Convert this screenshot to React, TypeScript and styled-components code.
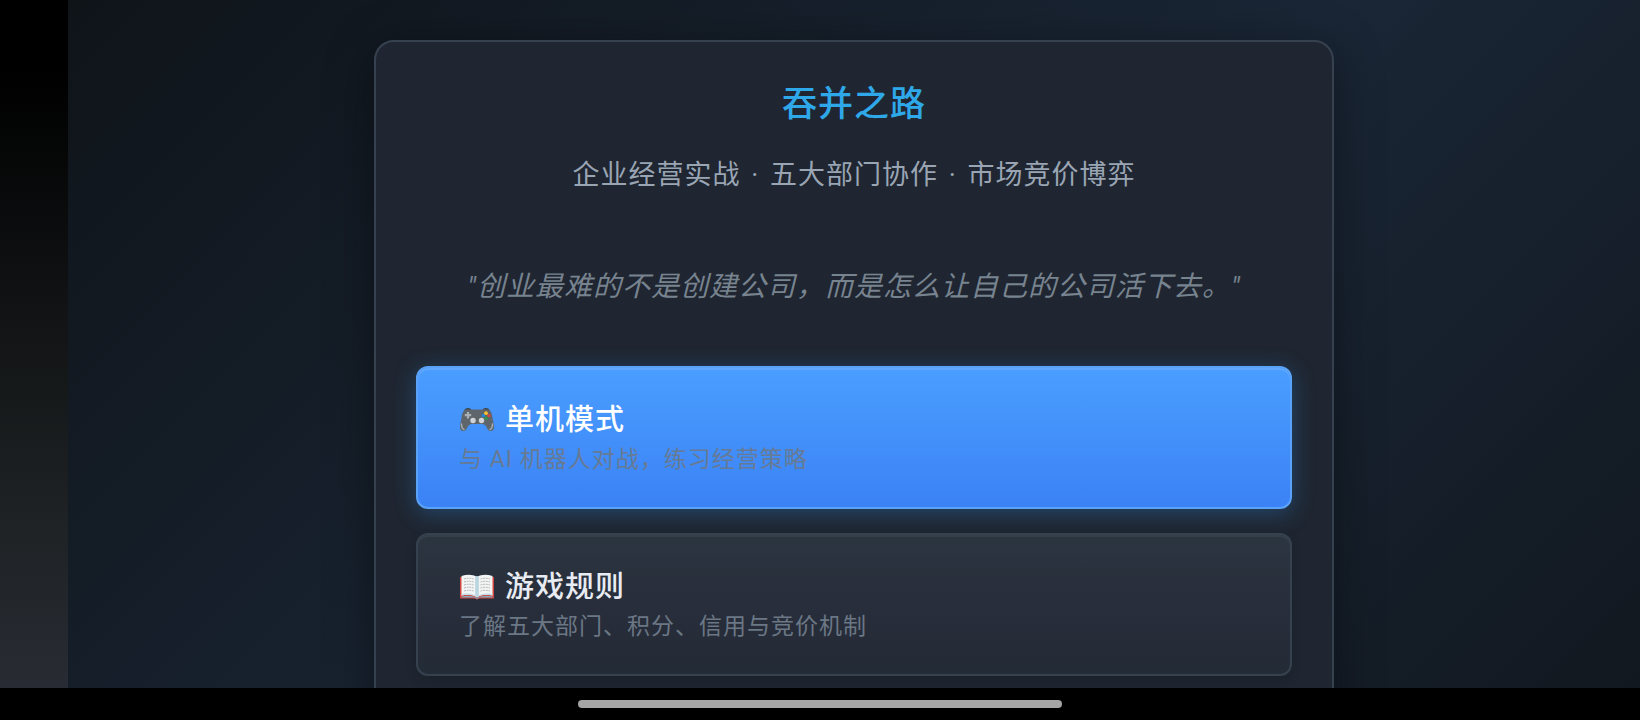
import React from "react";
import styled, { createGlobalStyle, css } from "styled-components";

const GlobalStyle = createGlobalStyle`
  *, *::before, *::after { box-sizing: border-box; }
  html, body, #root { height: 100%; margin: 0; }
  body {
    background: #000;
    color: #e8eaed;
    font-family: Roboto, "Noto Sans CJK SC", sans-serif;
    letter-spacing: 1px;
    overflow: hidden;
  }
`;

const Screen = styled.div`
  display: flex;
  flex-direction: column;
  height: 100vh;
`;

const Viewport = styled.div`
  display: flex;
  flex: 1;
  min-height: 0;
`;

const SafeArea = styled.div`
  flex: 0 0 68px;
  background: linear-gradient(180deg, #000 0%, #000 10%, #111314 45%, #1e2224 75%, #282b33 100%);
`;

const Scroller = styled.div`
  flex: 1;
  overflow-y: auto;
  scrollbar-width: none;
`;

const Page = styled.main`
  display: flex;
  justify-content: center;
  min-height: 970px;
  padding: 40px;
  background: linear-gradient(135deg, #0f1419 0%, #1a2636 50%, #0f1419 100%);
`;

const Card = styled.section`
  width: 100%;
  max-width: 960px;
  padding: 40px;
  border: 2px solid #36414f;
  border-radius: 20px;
  background: #1f2631;
  box-shadow: 0 8px 48px rgba(0, 0, 0, 0.4);
`;

const Title = styled.h1`
  margin: 0;
  font-size: 35px;
  font-weight: 500;
  line-height: 46px;
  text-align: center;
  color: #2fa8ea;
`;

const Subtitle = styled.p`
  margin: 25px 0 0;
  font-size: 27px;
  line-height: 44px;
  text-align: center;
  color: #9aa5b4;
`;

const Separator = styled.span`
  margin: 0 3px;
`;

const Quote = styled.p`
  margin: 48px 0 0;
  padding: 20px 0;
  font-size: 28px;
  font-style: italic;
  line-height: 44px;
  text-align: center;
  color: #77838f;
`;

const Menu = styled.nav`
  display: flex;
  flex-direction: column;
  gap: 24px;
  margin-top: 37px;
`;

const primaryLook = css`
  border-color: #5aa2f8;
  background: linear-gradient(180deg, #4a9eff 0%, #3b82f6 100%);
  box-shadow: 0 4px 22px rgba(46, 134, 222, 0.35), inset 0 2px 0 rgba(255, 255, 255, 0.12);
  color: #fff;
`;

const secondaryLook = css`
  border-color: #36414f;
  background: linear-gradient(180deg, #2b3540 0%, #282e3b 50%, #232b36 100%);
  box-shadow: 0 4px 12px rgba(0, 0, 0, 0.15), inset 0 2px 0 rgba(255, 255, 255, 0.05);
  color: #e8ecf2;
`;

const MenuButton = styled.button<{ $primary?: boolean }>`
  display: flex;
  flex-direction: column;
  width: 100%;
  padding: 30px 41px 29px;
  border: 2px solid;
  border-radius: 12px;
  font: inherit;
  letter-spacing: inherit;
  text-align: left;
  cursor: pointer;
  ${({ $primary }) => ($primary ? primaryLook : secondaryLook)}
`;

const ButtonTitle = styled.span`
  display: flex;
  align-items: center;
  gap: 10px;
  font-size: 29px;
  font-weight: 500;
  line-height: 44px;
`;

const ButtonNote = styled.span<{ $primary?: boolean }>`
  font-size: 23px;
  line-height: 36px;
  color: ${({ $primary }) => ($primary ? "#677a94" : "#6b7785")};
`;

const Icon = styled.svg`
  flex: none;
  width: 36px;
  height: 28px;
`;

const SystemBar = styled.footer`
  display: flex;
  justify-content: center;
  align-items: center;
  flex: 0 0 32px;
  background: #000;
`;

const HomeIndicator = styled.div`
  width: 484px;
  max-width: 60%;
  height: 8px;
  border-radius: 4px;
  background: #a6a6a6;
`;

const GamepadIcon = () => (
  <Icon viewBox="0 0 36 28" aria-hidden="true">
    <path d="M5 5 Q6 2 9 2 Q12 2 12.500 4 H23.500 Q24 2 27 2 Q30 2 31 5Z" fill="#3c4449" />
    <path d="M7 3.500 H29 Q32 4 33 9 L35 20 Q35.500 25 31.500 25 Q29 25 27.500 21 Q26 18 23 18 H13 Q10 18 8.500 21 Q7 25 4.500 25 Q.5 25 1 20 L3 9 Q4 4 7 3.500Z" fill="#5f666b" />
    <path d="M2.500 18 Q2.500 22.500 5 23.500 M33.500 18 Q33.500 22.500 31 23.500" fill="none" stroke="#a4acb0" strokeWidth="1.500" strokeLinecap="round" />
    <path d="M9 6 V12.500 M5.800 9.200 H12.200" stroke="#a9b0b5" strokeWidth="2.200" />
    <circle cx="14" cy="14.500" r="2.700" fill="#d0d4d6" />
    <circle cx="22.500" cy="14.500" r="2.700" fill="#d0d4d6" />
    <circle cx="27" cy="7.200" r="1.900" fill="#fbc02d" />
    <circle cx="24.300" cy="9.600" r="1.700" fill="#1e88e5" />
    <circle cx="30" cy="9.600" r="1.700" fill="#d9443c" />
    <circle cx="27.200" cy="12.200" r="1.700" fill="#2e9650" />
  </Icon>
);

const BookIcon = () => (
  <Icon viewBox="0 0 36 28" aria-hidden="true">
    <path d="M1 4 H35 V25.500 H20.500 L18 26.500 L15.500 25.500 H1Z" fill="#d2453f" />
    <path d="M2.500 23.500 Q10 21.500 18 24.500 Q26 21.500 33.500 23.500 V24.500 H20.500 L18 26 L15.500 24.500 H2.500Z" fill="#82a9b9" />
    <path d="M2.500 3 Q11 .5 18 3.500 Q25 .5 33.500 3 V22.500 Q25 20.500 18 24 Q11 20.500 2.500 22.500Z" fill="#f3f5f5" />
    <path d="M16.200 3 L18 3.800 L19.800 3 V22.800 L18 24 L16.200 22.800Z" fill="#b9d5df" />
    <path d="M2.500 21 Q11 19 18 23 Q25 19 33.500 21 V22.500 Q25 20.500 18 24 Q11 20.500 2.500 22.500Z" fill="#c5dfe8" />
    <path
      d="M5 6 Q10 4.500 14.500 6 M5 9 Q10 7.500 14.500 9 M5 12 Q10 10.500 14.500 12 M5 15 Q10 13.500 14.500 15 M5 18 Q10 16.500 14.500 18 M21.500 6 Q26 4.500 31 6 M21.500 9 Q26 7.500 31 9 M21.500 12 Q26 10.500 31 12 M21.500 15 Q26 13.500 31 15 M21.500 18 Q26 16.500 31 18"
      fill="none"
      stroke="#b3b6b7"
      strokeWidth="1"
      strokeDasharray="2 .7"
    />
  </Icon>
);

export default function App() {
  return (
    <Screen>
      <GlobalStyle />
      <Viewport>
        <SafeArea />
        <Scroller>
          <Page>
            <Card>
              <Title>吞并之路</Title>
              <Subtitle>
                企业经营实战 <Separator>·</Separator> 五大部门协作 <Separator>·</Separator> 市场竞价博弈
              </Subtitle>
              <Quote>"创业最难的不是创建公司，而是怎么让自己的公司活下去。"</Quote>
              <Menu>
                <MenuButton type="button" $primary>
                  <ButtonTitle>
                    <GamepadIcon />
                    单机模式
                  </ButtonTitle>
                  <ButtonNote $primary>与 AI 机器人对战，练习经营策略</ButtonNote>
                </MenuButton>
                <MenuButton type="button">
                  <ButtonTitle>
                    <BookIcon />
                    游戏规则
                  </ButtonTitle>
                  <ButtonNote>了解五大部门、积分、信用与竞价机制</ButtonNote>
                </MenuButton>
              </Menu>
            </Card>
          </Page>
        </Scroller>
      </Viewport>
      <SystemBar>
        <HomeIndicator />
      </SystemBar>
    </Screen>
  );
}
